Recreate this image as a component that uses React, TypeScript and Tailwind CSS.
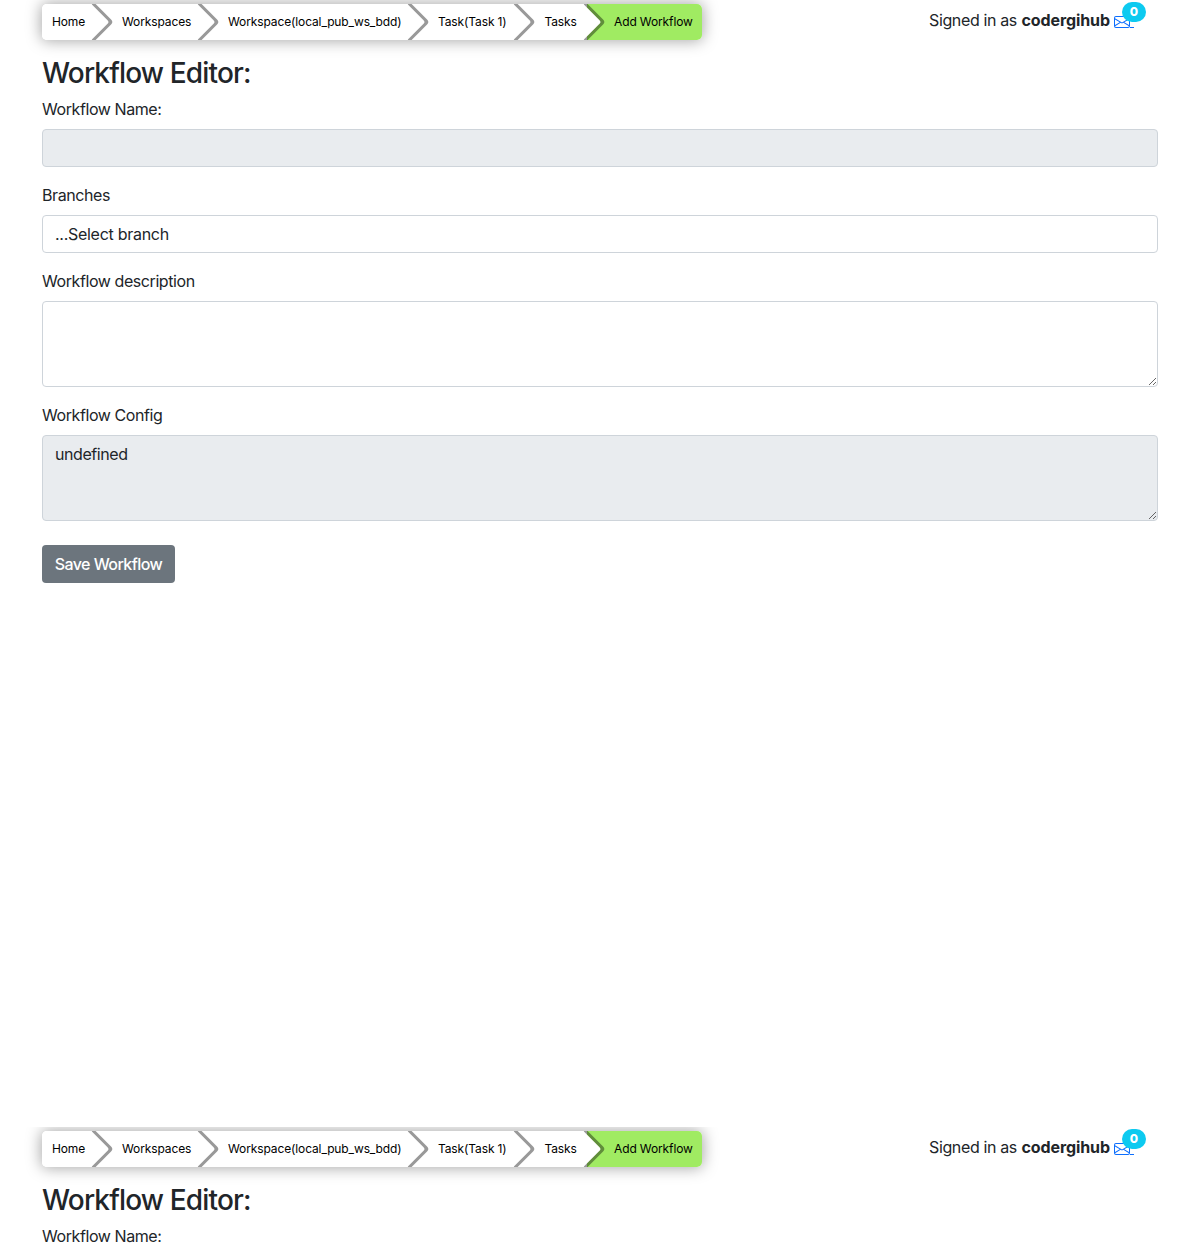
const crumbs = [
  { label: "Home", width: "w-[53px]" },
  { label: "Workspaces", width: "w-[106px]" },
  { label: "Workspace(local_pub_ws_bdd)", width: "w-[210px]" },
  { label: "Task(Task 1)", width: "w-[106.5px]" },
  { label: "Tasks", width: "w-[69.5px]" },
  { label: "Add Workflow", width: "w-[115px]" },
];

function Breadcrumb() {
  return (
    <nav className="flex h-9 w-[660px] rounded-[5px] shadow-[0_0_15px_1px_rgba(0,0,0,0.35)]">
      <ol className="flex h-9 overflow-hidden rounded-[5px] bg-white">
        {crumbs.map((c, i) => {
          const last = i === crumbs.length - 1;
          return (
            <li
              key={c.label}
              className={`${c.width} relative flex h-9 shrink-0 items-center text-[12px] tracking-[-0.12px] whitespace-nowrap text-black ${i === 0 ? "pl-2.5" : "pl-[27px]"} ${last ? "bg-[#a0eb62]" : "bg-white"}`}
            >
              <span className="relative z-20">{c.label}</span>
              {!last && (
                <span className="absolute top-[5px] -right-[8.7px] z-10 h-[26px] w-[26px] rotate-45 rounded-[0_5px_0_50px] bg-white shadow-[2px_-2px_0_1px_rgba(0,0,0,0.4)]" />
              )}
            </li>
          );
        })}
      </ol>
    </nav>
  );
}

function Grip() {
  return (
    <svg
      className="pointer-events-none absolute right-px bottom-px h-[7px] w-[7px]"
      viewBox="0 0 7 7"
      stroke="#555"
      strokeWidth="0.9"
      fill="none"
    >
      <path d="M0 7L7 0M4 7L7 4" />
    </svg>
  );
}

function Header() {
  return (
    <header className="flex items-start justify-between pt-1">
      <Breadcrumb />
      <div className="mr-3 flex h-8 w-[217px] items-center whitespace-nowrap">
        <span className="w-[88px] tracking-[-0.37px]">Signed in as</span>
        <b className="ml-[4.5px] w-[88.5px] tracking-[-0.1px]">codergihub</b>
        <span className="relative ml-1 h-4 w-5">
          <svg className="absolute top-[2px] left-0 h-4 w-4" viewBox="0 0 16 16" fill="#0d6efd">
            <path d="M0 4a2 2 0 0 1 2-2h12a2 2 0 0 1 2 2v8a2 2 0 0 1-2 2H2a2 2 0 0 1-2-2V4Zm2-1a1 1 0 0 0-1 1v.217l7 4.2 7-4.2V4a1 1 0 0 0-1-1H2Zm13 2.383-4.708 2.825L15 11.105V5.383Zm-.034 6.876-5.64-3.471L8 9.583l-1.326-.795-5.64 3.47A1 1 0 0 0 2 13h12a1 1 0 0 0 .966-.741ZM1 11.105l4.708-2.897L1 5.383v5.722Z" />
          </svg>
          <span className="absolute top-[15px] left-4 h-px w-1 bg-[#0d6efd]" />
          <span className="absolute -top-[10px] left-2 flex h-5 w-6 items-center justify-center rounded-full bg-[#0dcaf0] text-[12px] font-extrabold text-white">
            0
          </span>
        </span>
      </div>
    </header>
  );
}

const label = "mb-2 block leading-6 tracking-[-0.42px]";
const field = "block w-full rounded-[4px] border border-[#ced4da] px-3 py-1.5 leading-6";

function WorkflowEditor() {
  return (
    <section className="h-[1127px] overflow-hidden px-[42px]">
      <Header />
      <h2 className="mt-[17px] mb-1.5 text-[28px] leading-[33.6px] font-medium tracking-[-0.84px]">Workflow Editor:</h2>
      <label className={label}>Workflow Name:</label>
      <div className={`${field} mb-4 h-[38px] bg-[#e9ecef]`} />
      <label className={label}>Branches</label>
      <div className={`${field} mb-4 h-[38px] bg-white tracking-[-0.28px]`}>...Select branch</div>
      <label className={label}>Workflow description</label>
      <div className={`${field} relative mb-4 h-[86px] bg-white`}>
        <Grip />
      </div>
      <label className={label}>Workflow Config</label>
      <div className={`${field} relative mb-6 h-[86px] bg-[#e9ecef] tracking-[-0.43px]`}>
        undefined
        <Grip />
      </div>
      <button className="h-[38px] w-[133px] rounded-[4px] bg-[#6c757d] font-medium tracking-[-0.55px] whitespace-nowrap text-white">
        Save Workflow
      </button>
    </section>
  );
}

export default function App() {
  return (
    <main className="h-[1250px] w-[1200px] overflow-hidden bg-white font-['Inter',sans-serif] text-[16px] text-[#212529]">
      <WorkflowEditor />
      <WorkflowEditor />
    </main>
  );
}
